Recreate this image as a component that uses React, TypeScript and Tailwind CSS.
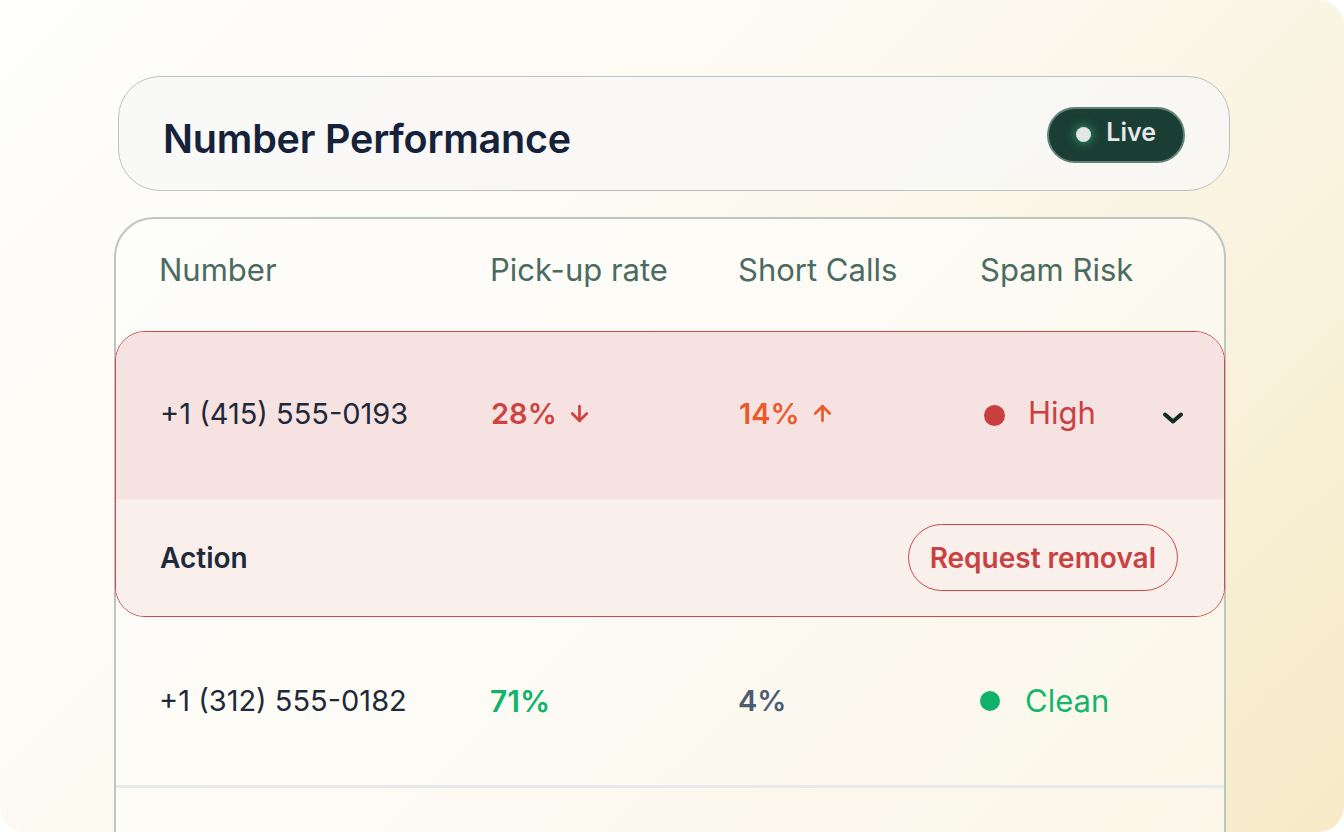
import { ArrowDown, ArrowUp } from 'lucide-react'

const font = { fontFamily: 'Inter, "Noto Sans", sans-serif' }

function Chevron() {
  return (
    <svg width="22" height="14" viewBox="0 0 22 14" fill="none">
      <path d="M3 3.5 L11 10.5 L19 3.5" stroke="#0f2b23" strokeWidth="4" strokeLinecap="round" strokeLinejoin="round" />
    </svg>
  )
}

export default function App() {
  return (
    <div className="w-[1344px] h-[832px] bg-white" style={font}>
      <div className="h-full w-full rounded-[26px] overflow-hidden bg-[linear-gradient(135deg,#fefefd_0%,#fcf9f0_45%,#f6eac6_100%)] pt-[76px]">
        {/* Header */}
        <div className="ml-[118px] w-[1112px] h-[115px] rounded-[42px] border border-[#b9c4c1] bg-[#f8f8f6]/80 flex items-center justify-between pl-[44px] pr-[44px]">
          <h1 className="text-[39.5px] font-semibold tracking-[-0.2px] text-[#16213a] mt-[12px]">Number Performance</h1>
          <div className="flex items-center gap-[15px] h-[56px] pl-[27px] pr-[27px] rounded-full bg-[#1b3e34] border-2 border-[#62817a] mt-[2px]">
            <span className="w-[15px] h-[15px] rounded-full bg-[#e3e6e6] shadow-[0_0_8px_2px_rgba(60,190,120,0.55)]" />
            <span className="text-[25px] font-semibold text-[#e6e8ea] -mt-[4px]">Live</span>
          </div>
        </div>

        {/* Table */}
        <div className="mt-[26px] ml-[114px] w-[1112px] h-[700px] rounded-[40px] border-2 border-[#bcc6c3] bg-[#fdfdfb]/60">
          <div className="grid grid-cols-[331px_248px_242px_1fr] pl-[43px] h-[112px] pb-[10px] items-center text-[31px] text-[#4b6b61]">
            <span>Number</span>
            <span>Pick-up rate</span>
            <span>Short Calls</span>
            <span>Spam Risk</span>
          </div>

          {/* flagged row */}
          <div className="-mx-[1px] rounded-[30px] border-[1.5px] border-[#d04747] overflow-hidden">
            <div className="h-[167px] bg-[#f6e3e1] grid grid-cols-[331px_248px_242px_1fr] pl-[44px] items-center">
              <span className="text-[29px] text-[#1e293b] -mt-[4px]">+1 (415) 555-0193</span>
              <span className="flex items-center gap-[10px] text-[29px] font-semibold text-[#cf4242] -mt-[4px]">
                28% <ArrowDown size={25} strokeWidth={2.6} />
              </span>
              <span className="flex items-center gap-[10px] text-[29px] font-semibold text-[#ea5a2c] -mt-[4px]">
                14% <ArrowUp size={25} strokeWidth={2.6} />
              </span>
              <div className="flex items-center pr-[40px]">
                <span className="w-[21px] h-[21px] rounded-full bg-[#c93f3f] ml-[3px]" />
                <span className="ml-[23px] text-[31px] text-[#c94141] -mt-[4px]">High</span>
                <span className="ml-auto mt-[4px]"><Chevron /></span>
              </div>
            </div>
            <div className="h-[117px] bg-[#f9f0ec] flex items-center justify-between pl-[44px] pr-[46px]">
              <span className="text-[28px] font-semibold text-[#1e293b]">Action</span>
              <button className="h-[67px] px-[21px] rounded-full border-[1.5px] border-[#d04747] text-[28px] font-semibold text-[#c94141]">
                Request removal
              </button>
            </div>
          </div>

          {/* clean row */}
          <div className="h-[171px] grid grid-cols-[331px_248px_242px_1fr] pl-[43px] items-center border-b-[3px] border-[#e7e9eb]">
            <span className="text-[29px] text-[#1e293b]">+1 (312) 555-0182</span>
            <span className="text-[30px] font-semibold text-[#12b36c]">71%</span>
            <span className="text-[29px] font-semibold text-[#4b5d70]">4%</span>
            <div className="flex items-center">
              <span className="w-[20px] h-[20px] rounded-full bg-[#0fb26b]" />
              <span className="ml-[25px] text-[31px] text-[#16b46d]">Clean</span>
            </div>
          </div>
        </div>
      </div>
    </div>
  )
}
